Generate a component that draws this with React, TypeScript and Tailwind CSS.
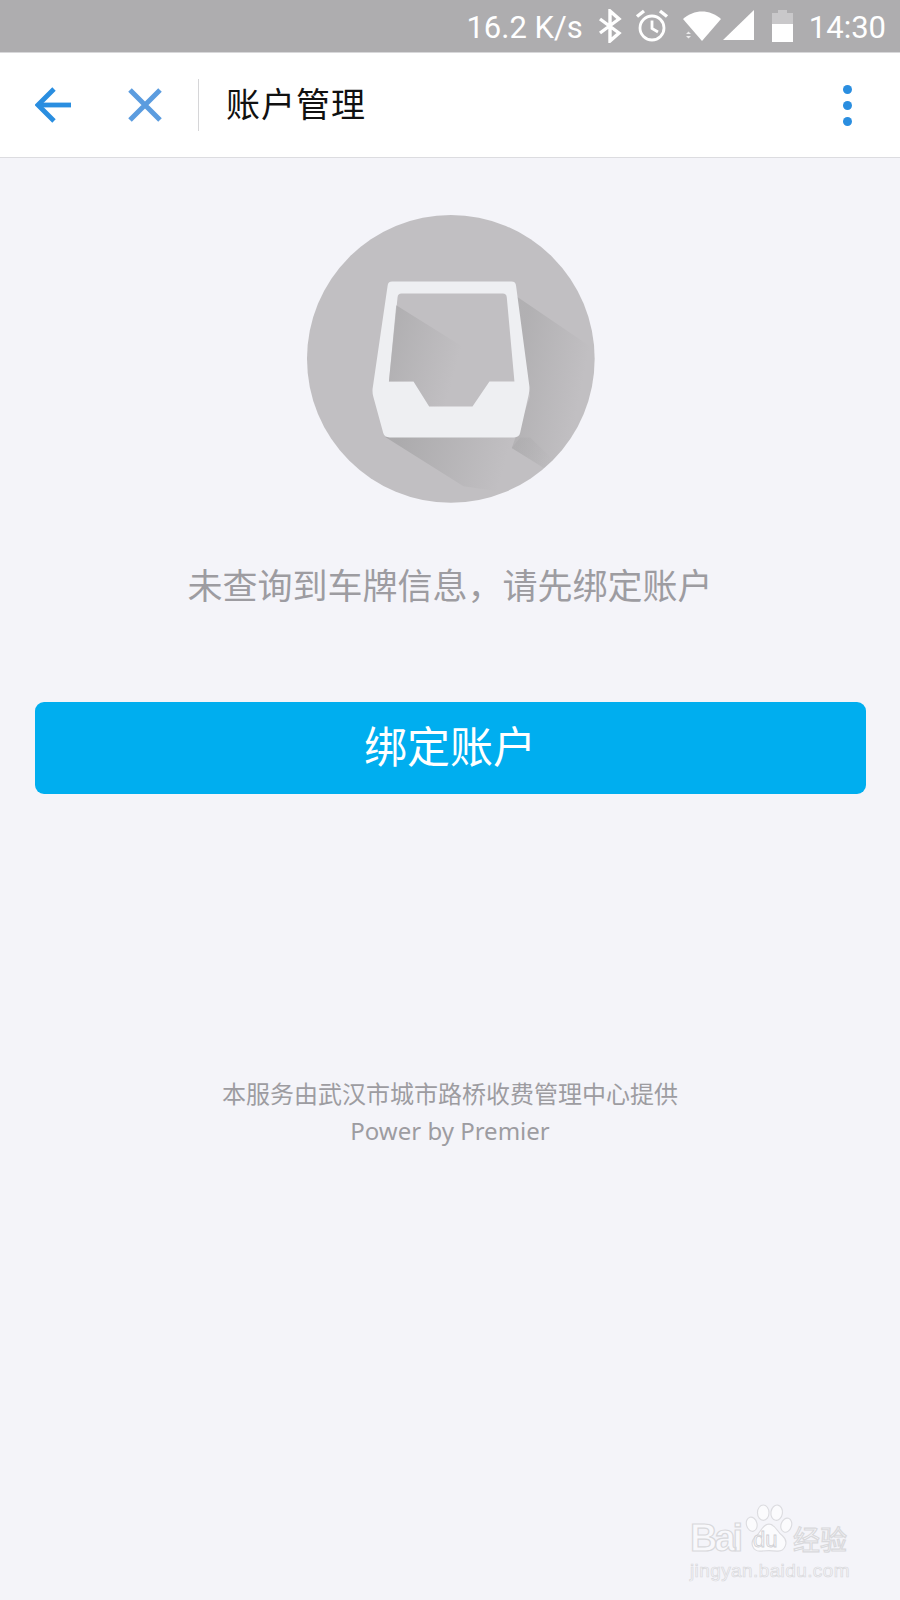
import React from "react";

const CJK = "font-['Roboto','Noto_Sans_CJK_SC',sans-serif]";

function Bluetooth() {
  return (
    <svg width="24" height="34" viewBox="0 0 24 34" fill="none" stroke="#fff" strokeWidth="3.4" className="ml-[15px]">
      <path d="M2 10 L21 24 L12 32 V2 L21 10 L2 24" />
    </svg>
  );
}
function Alarm() {
  return (
    <svg width="34" height="34" viewBox="0 0 34 34" fill="none" stroke="#fff" strokeWidth="2.8" className="ml-[13px]">
      <circle cx="17" cy="19" r="12" />
      <path d="M17 11.5 V19.5 L23 23" />
      <path d="M2 7.5 L9 2" strokeWidth="3.4" />
      <path d="M32 7.5 L25 2" strokeWidth="3.4" />
    </svg>
  );
}
function Wifi() {
  return (
    <svg width="38" height="32" viewBox="0 0 38 32" className="ml-[14px]">
      <path d="M0 9 C11 -1 27 -1 38 9 L19 31 Z" fill="#fff" />
      <path d="M3 24 L5.5 21.500 L8 24 Z M3 26 H8 L5.500 28.500 Z" fill="#fff" opacity="0.75" />
    </svg>
  );
}
function Signal() {
  return (
    <svg width="32" height="32" viewBox="0 0 32 32" className="ml-[2px]">
      <path d="M0 30 L31 0 V30 Z" fill="#fff" />
    </svg>
  );
}
function Battery() {
  return (
    <svg width="21" height="32" viewBox="0 0 21 32" className="ml-[17px]">
      <path d="M6 0 H15 V3 H21 V14 H0 V3 H6 Z" fill="#c9c8ca" />
      <rect x="0" y="14" width="21" height="18" fill="#fff" />
    </svg>
  );
}

function StatusBar() {
  return (
    <div className="flex h-[52px] items-center justify-end bg-[#aeadaf] pr-[14px] text-[31px] leading-none text-white font-['Roboto',sans-serif]">
      <span className="pt-[3px]">16.2 K/s</span>
      <Bluetooth />
      <Alarm />
      <Wifi />
      <Signal />
      <Battery />
      <span className="ml-[16px] pt-[3px]">14:30</span>
    </div>
  );
}

function NavBar() {
  return (
    <div className="flex h-[106px] items-center border-t border-b border-t-[#d8d8da] border-b-[#dcdce0] bg-white">
      <svg width="38" height="36" viewBox="0 0 38 36" fill="none" stroke="#2a8ee0" strokeWidth="4.800" className="ml-[35px]">
        <path d="M36 18 H4" />
        <path d="M19 2 L3 18 L19 34" />
      </svg>
      <svg width="34" height="34" viewBox="0 0 34 34" fill="none" stroke="#5b9cdf" strokeWidth="5" className="ml-[55px]">
        <path d="M2 2 L32 32 M32 2 L2 32" />
      </svg>
      <div className="ml-[36px] h-[52px] w-px bg-[#d6d6d8]" />
      <span className={`ml-[27px] text-[34px] leading-none tracking-[1px] text-[#111] ${CJK}`}>账户管理</span>
      <div className="ml-auto mr-[48px] flex flex-col gap-[7px]">
        <div className="h-[9px] w-[9px] rounded-full bg-[#2a8ee0]" />
        <div className="h-[9px] w-[9px] rounded-full bg-[#2a8ee0]" />
        <div className="h-[9px] w-[9px] rounded-full bg-[#2a8ee0]" />
      </div>
    </div>
  );
}

function InboxArt() {
  return (
    <svg width="288" height="288" viewBox="50 45 865 865" className="ml-[2px] block">
      <defs>
        <clipPath id="disc">
          <circle cx="482" cy="477" r="432" />
        </clipPath>
        <linearGradient id="shadeA" gradientUnits="userSpaceOnUse" x1="296" y1="400" x2="510" y2="460">
          <stop offset="0" stopColor="#a9a8aa" stopOpacity="0.7" />
          <stop offset="1" stopColor="#a9a8aa" stopOpacity="0" />
        </linearGradient>
        <linearGradient id="shadeB" gradientUnits="userSpaceOnUse" x1="680" y1="500" x2="880" y2="540">
          <stop offset="0" stopColor="#a9a8aa" stopOpacity="0.65" />
          <stop offset="1" stopColor="#a9a8aa" stopOpacity="0" />
        </linearGradient>
        <linearGradient id="shadeC" gradientUnits="userSpaceOnUse" x1="320" y1="720" x2="640" y2="810">
          <stop offset="0" stopColor="#a9a8aa" stopOpacity="0.9" />
          <stop offset="1" stopColor="#a9a8aa" stopOpacity="0" />
        </linearGradient>
        <linearGradient id="shadeD" gradientUnits="userSpaceOnUse" x1="665" y1="740" x2="780" y2="790">
          <stop offset="0" stopColor="#a9a8aa" stopOpacity="0.45" />
          <stop offset="1" stopColor="#a9a8aa" stopOpacity="0" />
        </linearGradient>
      </defs>
      <circle cx="482" cy="477" r="432" fill="#c1bfc2" />
      <g clipPath="url(#disc)">
        <path d="M680 290 L960 480 V660 L800 830 L665 745 L720 590 Z" fill="url(#shadeB)" />
        <path d="M285 712 H680 L665 745 L760 803 L660 880 L520 860 Z" fill="url(#shadeC)" />
        <path d="M665 745 L690 713 H720 L800 790 L760 803 Z" fill="url(#shadeD)" />
      </g>
      <path
        d="M292 258 Q293 245 306 245 H664 Q677 245 678 258 L718 560 Q719 572 716 584 L690 700 Q687 713 672 713 H298 Q283 713 279 700 L249 590 Q245 575 248 560 Z"
        fill="#eeeff2"
      />
      <path
        d="M322 292 Q323 281 334 281 H638 Q649 281 650 292 L673 545 H598 L547 620 H417 L370 545 H296 Z"
        fill="#c1bfc2"
      />
      <path d="M318 316 L520 442 L570 620 H417 L370 545 H296 Z" fill="url(#shadeA)" />
    </svg>
  );
}

function Watermark() {
  const outline = "text-[#f8f8fb] [-webkit-text-stroke:1.2px_#d9d9dc]";
  return (
    <div className="absolute left-[690px] top-[1503px] w-[180px] select-none">
      <div className="flex items-end">
        <span className={`w-[54px] text-[38px] leading-[34px] tracking-[-3px] font-bold font-['Liberation_Sans',sans-serif] ${outline}`}>Bai</span>
        <div className="relative ml-[1px] h-[52px] w-[48px]">
          <svg width="48" height="52" viewBox="0 0 50 52" className="absolute left-0 top-0" fill="#fbfbfd" stroke="#dcdce0" strokeWidth="1.200">
            <ellipse cx="7" cy="21" rx="5.500" ry="7.500" transform="rotate(-15 7 21)" />
            <ellipse cx="19" cy="9" rx="6" ry="8" />
            <ellipse cx="33" cy="9" rx="6" ry="8" transform="rotate(8 33 9)" />
            <ellipse cx="43" cy="22" rx="5.500" ry="7.500" transform="rotate(18 43 22)" />
            <path d="M25 21 C32 21 33 29 39 33 C46 39 42 50 33 49 C28 48.500 22 48.500 17 49 C8 50 4 40 11 34 C17 29 18 21 25 21 Z" />
          </svg>
          <span className="absolute bottom-[4px] left-[8px] text-[22px] leading-none font-['Liberation_Sans',sans-serif] text-[#f8f8fb] [-webkit-text-stroke:0.800px_#cfcfd3]">du</span>
        </div>
        <span className={`text-[27px] leading-[32px] font-['Noto_Sans_CJK_SC',sans-serif] ${outline}`}>经验</span>
      </div>
      <div className="mt-[6px] text-[19px] leading-none tracking-[0.4px] font-['Liberation_Sans',sans-serif] text-[#f6f6fa] [-webkit-text-stroke:0.700px_#d9d9dc]">
        jingyan.baidu.com
      </div>
    </div>
  );
}

export default function App() {
  return (
    <div className={`relative min-h-[1600px] w-[900px] overflow-hidden bg-[#f4f4f9] ${CJK}`}>
      <StatusBar />
      <NavBar />
      <div className="flex flex-col items-center pt-[57px]">
        <InboxArt />
        <p className="mt-[61px] text-[35px] leading-[48px] text-[#9d9ca1]">未查询到车牌信息，请先绑定账户</p>
        <div className="mt-[90px] flex h-[92px] w-[831px] items-center justify-center rounded-[9px] bg-[#00aeef] text-[43px] text-white">
          绑定账户
        </div>
        <div className="mt-[284px] flex flex-col items-center text-[24px] leading-[35px] text-[#9d9ca1]">
          <span>本服务由武汉市城市路桥收费管理中心提供</span>
          <span className="font-['Noto_Sans','Noto_Sans_CJK_SC',sans-serif] text-[24px]">Power by Premier</span>
        </div>
      </div>
      <Watermark />
    </div>
  );
}
